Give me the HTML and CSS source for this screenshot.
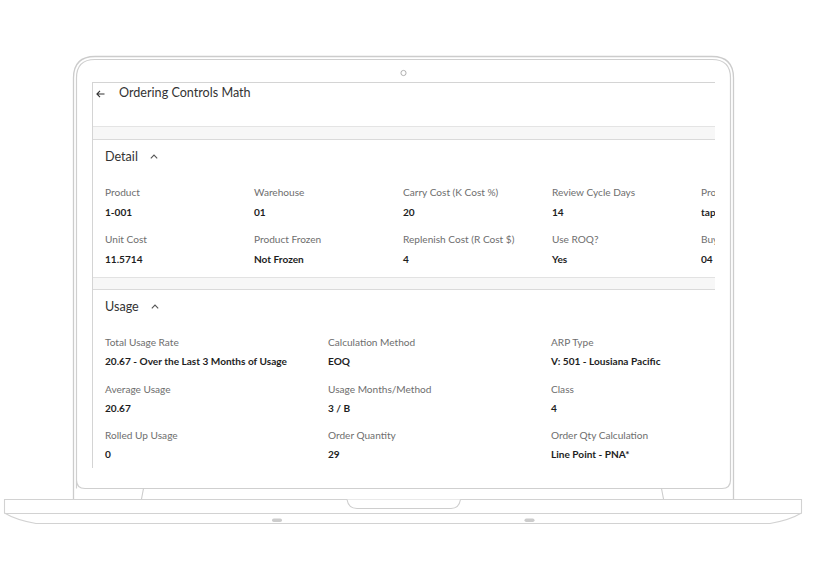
FILE: index.html
```html
<!DOCTYPE html>
<html lang="en">
<head>
<meta charset="utf-8">
<title>Ordering Controls Math</title>
<link rel="stylesheet" href="styles.css">
</head>
<body>
<div class="stage">
  <svg class="laptop" width="818" height="582" viewBox="0 0 818 582" fill="none">
    <path class="lid" d="M73.5 499 V78 Q73.5 56.5 95 56.5 H712 Q733.5 56.5 733.5 78 V499"/>
    <path class="bezel" d="M76.5 488.5 V78 Q76.5 59.5 95 59.5 H712 Q730.5 59.5 730.5 78 V480 Q730.5 488.5 722 488.5 H85 Q76.5 488.5 76.5 480 Z"/>
    <circle class="cam" cx="403.5" cy="73" r="2.6"/>
    <path class="hinge" d="M143.5 488.5 L141.5 499 M661.5 488.5 L663.5 499"/>
    <path class="base" d="M4.5 499.5 H801.5 V513 Q790 520 770 523.5 H36 Q16 520 4.5 513 Z"/>
    <path class="base-line" d="M4.5 513.5 H801.5"/>
    <path class="notch" d="M347 499.5 Q348.5 508.5 357 508.5 H451 Q459 508.5 460.5 499.5"/>
    <rect class="foot" x="272" y="518.5" width="10" height="3.5" rx="1.75"/>
    <rect class="foot" x="524.5" y="518.5" width="10" height="3.5" rx="1.75"/>
  </svg>

  <div class="screen">
    <header class="topbar">
      <svg class="back" width="9" height="8" viewBox="0 0 9 8" fill="none">
        <path d="M8.5 4 H1 M4 0.8 L0.9 4 L4 7.2" stroke="#333" stroke-width="1.1"/>
      </svg>
      <h1 class="page-title">Ordering Controls Math</h1>
    </header>

    <div class="content">
      <section class="card">
        <div class="card-head">
          <span class="card-title">Detail</span>
          <svg class="chev" width="8" height="5" viewBox="0 0 8 5" fill="none"><path d="M0.8 4.3 L4 1 L7.2 4.3" stroke="#555" stroke-width="1.1"/></svg>
        </div>
        <div class="grid grid-detail">
          <div class="field"><div class="label">Product</div><div class="value">1-001</div></div>
          <div class="field"><div class="label">Warehouse</div><div class="value">01</div></div>
          <div class="field"><div class="label">Carry Cost (K Cost %)</div><div class="value">20</div></div>
          <div class="field"><div class="label">Review Cycle Days</div><div class="value">14</div></div>
          <div class="field"><div class="label">Product Line</div><div class="value">tape</div></div>
          <div class="field"><div class="label">Unit Cost</div><div class="value">11.5714</div></div>
          <div class="field"><div class="label">Product Frozen</div><div class="value">Not Frozen</div></div>
          <div class="field"><div class="label">Replenish Cost (R Cost $)</div><div class="value">4</div></div>
          <div class="field"><div class="label">Use ROQ?</div><div class="value">Yes</div></div>
          <div class="field"><div class="label">Buyer</div><div class="value">04</div></div>
        </div>
      </section>

      <section class="card">
        <div class="card-head">
          <span class="card-title">Usage</span>
          <svg class="chev" width="8" height="5" viewBox="0 0 8 5" fill="none"><path d="M0.8 4.3 L4 1 L7.2 4.3" stroke="#555" stroke-width="1.1"/></svg>
        </div>
        <div class="grid grid-usage">
          <div class="field"><div class="label">Total Usage Rate</div><div class="value">20.67 - Over the Last 3 Months of Usage</div></div>
          <div class="field"><div class="label">Calculation Method</div><div class="value">EOQ</div></div>
          <div class="field"><div class="label">ARP Type</div><div class="value">V: 501 - Lousiana Pacific</div></div>
          <div class="field"><div class="label">Average Usage</div><div class="value">20.67</div></div>
          <div class="field"><div class="label">Usage Months/Method</div><div class="value">3 / B</div></div>
          <div class="field"><div class="label">Class</div><div class="value">4</div></div>
          <div class="field"><div class="label">Rolled Up Usage</div><div class="value">0</div></div>
          <div class="field"><div class="label">Order Quantity</div><div class="value">29</div></div>
          <div class="field"><div class="label">Order Qty Calculation</div><div class="value">Line Point - PNA*</div></div>
        </div>
      </section>
    </div>
  </div>
</div>
</body>
</html>
```

FILE: styles.css
```css
* { box-sizing: border-box; }

html, body {
  margin: 0;
  padding: 0;
  background: #ffffff;
}

body {
  font-family: Lato, "Noto Sans", sans-serif;
  color: #222;
}

.stage {
  position: relative;
  width: 818px;
  height: 582px;
  overflow: hidden;
  background: #fff;
}

.laptop {
  position: absolute;
  left: 0;
  top: 0;
}

.lid { stroke: #cccccc; stroke-width: 1.3; }
.bezel { stroke: #cfcfcf; stroke-width: 1.2; fill: #fff; }
.cam { stroke: #a8a8a8; stroke-width: 0.9; fill: #fff; }
.hinge { stroke: #cccccc; stroke-width: 1.1; }
.base { stroke: #d2d2d2; stroke-width: 1.1; fill: #fff; }
.base-line { stroke: #d2d2d2; stroke-width: 1; }
.notch { stroke: #cecece; stroke-width: 1.1; fill: #fff; }
.foot { fill: #cccccc; }

/* screen overlay */
.screen {
  position: absolute;
  left: 92px;
  top: 82px;
  width: 623px;
  height: 386px;
  overflow: hidden;
  border-left: 1px solid #d4d4d4;
  border-top: 1px solid #d4d4d4;
  background: #fff;
  display: flex;
  flex-direction: column;
}

.topbar {
  height: 44px;
  flex: none;
  display: flex;
  align-items: flex-start;
  padding: 1px 0 0 3px;
  border-bottom: 1px solid #e4e4e4;
}

.back {
  margin-top: 6px;
  flex: none;
}

.page-title {
  margin: 0 0 0 14px;
  font-size: 12.6px;
  line-height: 18px;
  font-weight: 400;
  color: #333;
}

.content {
  flex: 1;
  background: #f7f7f7;
  padding-top: 12px;
  display: flex;
  flex-direction: column;
  gap: 11px;
  width: 700px;
}

.card {
  background: #fff;
  border-top: 1px solid #dadada;
  border-bottom: 1px solid #e2e2e2;
  padding: 8px 12px 11px;
}

.card-head {
  display: flex;
  align-items: center;
  gap: 12px;
  height: 18px;
}

.card-title {
  font-size: 12.6px;
  line-height: 18px;
  color: #333;
}

.chev { flex: none; margin-top: -2px; }

.grid {
  display: grid;
}

.grid-detail {
  grid-template-columns: repeat(5, 149px);
  margin-top: 19px;
  row-gap: 13px;
}
.grid-detail .field { gap: 6px; }

.grid-usage {
  grid-template-columns: repeat(3, 223px);
  margin-top: 19px;
  row-gap: 13.5px;
}

.field {
  display: flex;
  flex-direction: column;
  gap: 5px;
  white-space: nowrap;
}

.label {
  font-size: 10.1px;
  line-height: 14px;
  color: #6e6e6e;
}

.value {
  font-size: 10.1px;
  line-height: 14px;
  font-weight: 700;
  color: #1e1e1e;
}
```
